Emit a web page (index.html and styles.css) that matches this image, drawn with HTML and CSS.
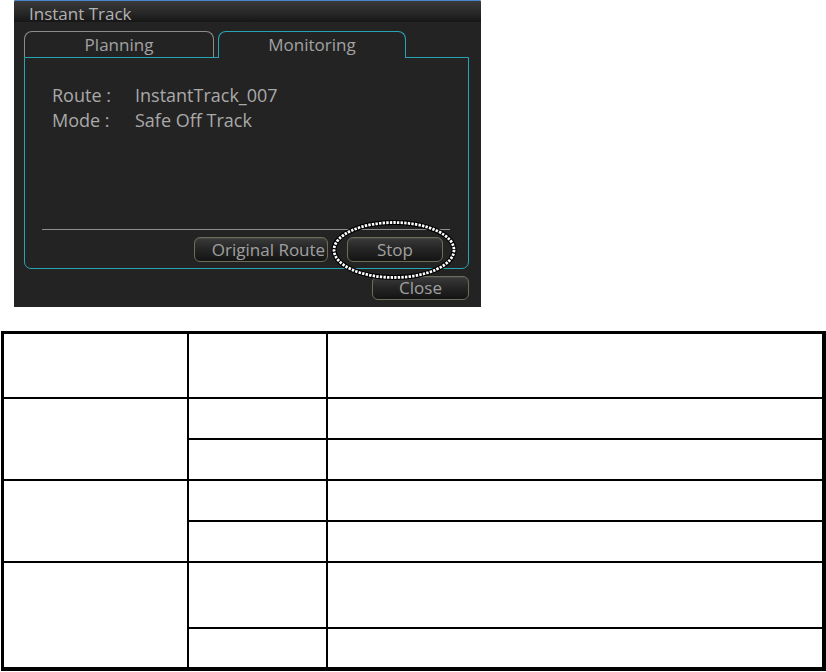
FILE: index.html
```html
<!DOCTYPE html>
<html lang="en">
<head>
<meta charset="utf-8">
<title>Instant Track</title>
<link rel="stylesheet" href="styles.css">
</head>
<body>
<div class="dialog">
  <div class="titlebar">Instant Track</div>
  <div class="tabs">
    <div class="tab tab-inactive">Planning</div>
    <div class="tab tab-active">Monitoring</div>
  </div>
  <div class="panel">
    <div class="info">
      <div class="info-row"><span class="info-label">Route :</span><span class="info-value">InstantTrack_007</span></div>
      <div class="info-row"><span class="info-label">Mode :</span><span class="info-value">Safe Off Track</span></div>
    </div>
    <div class="separator"></div>
    <div class="actions">
      <button class="btn btn-original">Original Route</button>
      <button class="btn btn-stop">Stop</button>
    </div>
  </div>
  <div class="footer">
    <button class="btn btn-close">Close</button>
  </div>
  <svg class="callout" width="130" height="64" viewBox="0 0 130 64" aria-hidden="true">
    <ellipse cx="65" cy="32" rx="60" ry="27.5" fill="none" stroke="#000" stroke-width="5"/>
    <ellipse cx="65" cy="32" rx="60" ry="27.5" fill="none" stroke="#fff" stroke-width="2.8" stroke-dasharray="2.4 1.2"/>
  </svg>
</div>

<div class="grid">
  <div class="cell c1 head"></div>
  <div class="cell c2 head"></div>
  <div class="cell c3 head"></div>

  <div class="cell c1 span2 r1"></div>
  <div class="cell c2 r1"></div>
  <div class="cell c3 r1"></div>
  <div class="cell c2 r2"></div>
  <div class="cell c3 r2"></div>

  <div class="cell c1 span2 r3"></div>
  <div class="cell c2 r3"></div>
  <div class="cell c3 r3"></div>
  <div class="cell c2 r4"></div>
  <div class="cell c3 r4"></div>

  <div class="cell c1 span2 r5"></div>
  <div class="cell c2 r5"></div>
  <div class="cell c3 r5"></div>
  <div class="cell c2 r6"></div>
  <div class="cell c3 r6"></div>
</div>
</body>
</html>
```
FILE: styles.css
```css
html, body {
  margin: 0;
  padding: 0;
  background: #ffffff;
}

body {
  font-family: "Open Sans", Lato, "DejaVu Sans", sans-serif;
}

.dialog {
  position: relative;
  box-sizing: border-box;
  margin-left: 14px;
  width: 467px;
  height: 307px;
  background: #232323;
  border-radius: 2px 2px 0 0;
  display: flex;
  flex-direction: column;
}

.titlebar {
  box-sizing: border-box;
  height: 22px;
  border-top: 1px solid #4a86cf;
  background: linear-gradient(#3a3a3a, #282828 55%, #161616);
  color: #b2b2b2;
  font-size: 17px;
  line-height: 18px;
  padding-top: 4px;
  padding-left: 15px;
  border-radius: 2px 2px 0 0;
  white-space: nowrap;
}

.tabs {
  display: flex;
  gap: 4px;
  margin-top: 9px;
  margin-left: 10px;
  height: 26px;
  align-items: flex-start;
}

.tab {
  box-sizing: border-box;
  height: 26px;
  border: 1px solid;
  border-bottom: none;
  border-radius: 8px 8px 0 0;
  color: #a2a2a2;
  font-size: 17px;
  line-height: 24px;
  padding-top: 1px;
  text-align: center;
  background: #232323;
}

.tab-inactive {
  width: 190px;
  border-color: #8c8c8c;
}

.tab-active {
  position: relative;
  z-index: 1;
  width: 188px;
  height: 27px;
  border-color: #28a5b2;
}

.panel {
  box-sizing: border-box;
  margin-left: 10px;
  width: 445px;
  height: 212px;
  border: 1px solid #28a5b2;
  border-radius: 0 0 7px 7px;
  display: flex;
  flex-direction: column;
  padding-bottom: 6px;
}

.info {
  padding-top: 25px;
  padding-left: 27px;
  color: #a9a9a9;
  font-size: 18px;
  line-height: 25px;
}

.info-row {
  display: flex;
  white-space: nowrap;
}

.info-label {
  width: 83px;
}

.separator {
  margin-top: auto;
  margin-left: 17px;
  width: 408px;
  height: 1px;
  background: #8e8e8e;
}

.actions {
  display: flex;
  justify-content: flex-end;
  gap: 19px;
  margin-top: 7px;
  padding-right: 25px;
}

.btn {
  box-sizing: border-box;
  height: 25px;
  padding: 0;
  border: 1px solid #6f6c58;
  border-radius: 6px;
  background: linear-gradient(#3a3a3a, #262626 45%, #141414);
  color: #a0a0a0;
  font-family: "Open Sans", Lato, "DejaVu Sans", sans-serif;
  font-size: 17px;
  line-height: 20px;
  text-align: center;
  white-space: nowrap;
  box-shadow: inset 0 1px 0 rgba(255, 255, 255, 0.06);
}

.btn-original {
  width: 134px;
  padding-left: 15px;
}

.btn-stop {
  width: 96px;
}

.footer {
  display: flex;
  justify-content: flex-end;
  margin-top: 7px;
  padding-right: 12px;
}

.btn-close {
  width: 97px;
  height: 24px;
  line-height: 22px;
}

.callout {
  position: absolute;
  left: 315px;
  top: 218px;
}

/* table */
.grid {
  margin-top: 24px;
  margin-left: 1px;
  width: 825px;
  box-sizing: border-box;
  border-style: solid;
  border-color: #000;
  border-width: 3px 4px 4px 3px;
  background: #000;
  display: grid;
  grid-template-columns: 183px 137px 494px;
  grid-template-rows: 63px 39px 39px 39px 39px 64px 38px;
  gap: 2px;
}

.cell {
  background: #fff;
}

.c1 { grid-column: 1; }
.c2 { grid-column: 2; }
.c3 { grid-column: 3; }
.head { grid-row: 1; }
.r1 { grid-row: 2; }
.r2 { grid-row: 3; }
.r3 { grid-row: 4; }
.r4 { grid-row: 5; }
.r5 { grid-row: 6; }
.r6 { grid-row: 7; }
.span2.r1 { grid-row: 2 / span 2; }
.span2.r3 { grid-row: 4 / span 2; }
.span2.r5 { grid-row: 6 / span 2; }
```
